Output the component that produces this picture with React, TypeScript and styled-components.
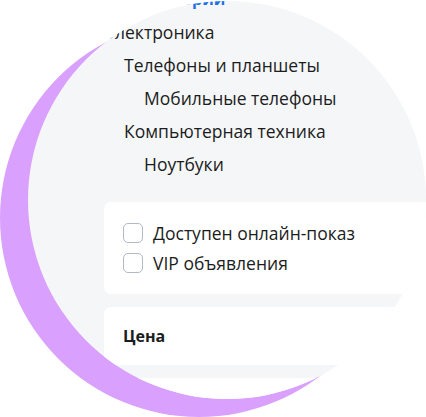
import React from "react";
import styled, { createGlobalStyle } from "styled-components";

const GlobalStyle = createGlobalStyle`
  html, body { margin: 0; padding: 0; background: #ffffff; }
  body { font-family: "Open Sans", "Noto Sans", sans-serif; color: #1b1d21; }
  * { box-sizing: border-box; }
`;

const Stage = styled.div`
  position: relative;
  width: 426px;
  height: 417px;
  overflow: hidden;
  background: #ffffff;
  padding: 1px 0 0 28px;
`;

const Backdrop = styled.div`
  position: absolute;
  left: 0;
  top: 19px;
  width: 398px;
  height: 398px;
  border-radius: 50%;
  background: #d9a1fd;
`;

const Lens = styled.div`
  position: relative;
  width: 398px;
  height: 398px;
  border-radius: 50%;
  overflow: hidden;
  background: #f5f6f8;
`;

const Sidebar = styled.aside`
  display: flex;
  flex-direction: column;
  margin-top: -18px;
  padding-left: 76px;
`;

const CategoryList = styled.ul`
  list-style: none;
  margin: 0 0 21px;
  padding: 0;
  display: flex;
  flex-direction: column;
`;

const CategoryHeader = styled.li`
  height: 33px;
  line-height: 33px;
  font-size: 16px;
  font-weight: 700;
  color: #1e6fe8;
  white-space: nowrap;
`;

const CategoryItem = styled.li<{ $level: number }>`
  height: 33px;
  line-height: 33px;
  font-size: 17.5px;
  padding-left: ${(p) => p.$level * 20}px;
  color: #1b1d21;
  white-space: nowrap;
`;

const Card = styled.section<{ $pad: string; $height?: number }>`
  background: #ffffff;
  border-radius: 7px 0 0 7px;
  padding: ${(p) => p.$pad};
  margin-bottom: 13px;
  display: flex;
  flex-direction: column;
  min-height: ${(p) => (p.$height ? `${p.$height}px` : "0")};
`;

const CheckRow = styled.label`
  display: flex;
  align-items: center;
  gap: 10px;
  height: 30px;
  font-size: 17.5px;
  white-space: nowrap;
`;

const Box = styled.span`
  width: 20px;
  height: 20px;
  flex: none;
  border: 1.5px solid #b1b9c4;
  border-radius: 5px;
  background: #ffffff;
`;

const CardTitle = styled.h3`
  margin: 0;
  font-size: 16px;
  font-weight: 700;
  line-height: 24px;
`;

export default function App() {
  return (
    <>
      <GlobalStyle />
      <Stage>
        <Backdrop />
        <Lens>
          <Sidebar>
            <CategoryList>
              <CategoryHeader>Все категории</CategoryHeader>
              <CategoryItem $level={0}>Электроника</CategoryItem>
              <CategoryItem $level={1}>Телефоны и планшеты</CategoryItem>
              <CategoryItem $level={2}>Мобильные телефоны</CategoryItem>
              <CategoryItem $level={1}>Компьютерная техника</CategoryItem>
              <CategoryItem $level={2}>Ноутбуки</CategoryItem>
            </CategoryList>
            <Card $pad="16px 0 16px 19px">
              <CheckRow>
                <Box />
                Доступен онлайн-показ
              </CheckRow>
              <CheckRow>
                <Box />
                VIP объявления
              </CheckRow>
            </Card>
            <Card $pad="17px 0 17px 19px">
              <CardTitle>Цена</CardTitle>
            </Card>
            <Card $pad="0" $height={58} />
          </Sidebar>
        </Lens>
      </Stage>
    </>
  );
}
